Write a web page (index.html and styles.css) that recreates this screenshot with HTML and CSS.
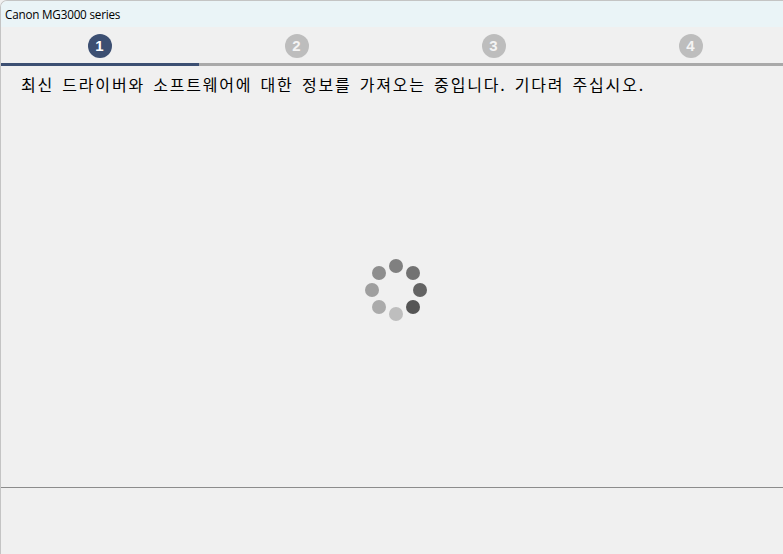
FILE: index.html
```html
<!DOCTYPE html>
<html lang="ko">
<head>
<meta charset="utf-8">
<title>Canon MG3000 series</title>
<link rel="stylesheet" href="styles.css">
</head>
<body>
<div class="window">
  <div class="titlebar">Canon MG3000 series</div>
  <div class="steps">
    <div class="step active"><span class="num">1</span></div>
    <div class="step"><span class="num">2</span></div>
    <div class="step"><span class="num">3</span></div>
    <div class="step"><span class="num">4</span></div>
  </div>
  <div class="progress"><div class="progress-fill"></div></div>
  <div class="main">
    <p class="message">최신 드라이버와 소프트웨어에 대한 정보를 가져오는 중입니다. 기다려 주십시오.</p>
    <div class="spinner-area">
      <svg class="spinner" width="64" height="64" viewBox="0 0 64 64">
        <circle cx="32" cy="8" r="7" fill="#808080"/>
        <circle cx="49" cy="15" r="7" fill="#727272"/>
        <circle cx="56" cy="32" r="7" fill="#636363"/>
        <circle cx="49" cy="49" r="7" fill="#555555"/>
        <circle cx="32" cy="56" r="7" fill="#bebebe"/>
        <circle cx="15" cy="49" r="7" fill="#ababab"/>
        <circle cx="8" cy="32" r="7" fill="#9f9f9f"/>
        <circle cx="15" cy="15" r="7" fill="#8e8e8e"/>
      </svg>
    </div>
  </div>
  <div class="footer"></div>
</div>
</body>
</html>
```

FILE: styles.css
```css
html, body {
  margin: 0;
  padding: 0;
  background: #f0f0f0;
}
.window {
  width: 783px;
  height: 554px;
  box-sizing: border-box;
  border-left: 1px solid #c4c4c4;
  border-top: 1px solid #c4c4c4;
  border-top-left-radius: 7px;
  background: #f0f0f0;
  display: flex;
  flex-direction: column;
  overflow: hidden;
}
.titlebar {
  height: 26px;
  flex: none;
  background: #eaf4f7;
  font-family: "Open Sans", "Noto Sans", sans-serif;
  font-size: 11.7px;
  color: #000;
  line-height: 26px;
  padding-left: 4px;
  letter-spacing: -0.2px;
}
.steps {
  height: 36px;
  width: 788px;
  flex: none;
  display: grid;
  grid-template-columns: repeat(4, 197px);
}
.step {
  display: flex;
  align-items: center;
  justify-content: center;
  padding-top: 1px;
}
.num {
  width: 24px;
  height: 24px;
  border-radius: 50%;
  background: #bdbdbd;
  color: #f4f4f4;
  font-family: "Liberation Sans", Arial, sans-serif;
  font-weight: bold;
  font-size: 15px;
  line-height: 24px;
  text-align: center;
}
.step.active .num {
  background: #3c4f72;
  color: #fff;
}
.progress {
  height: 3px;
  flex: none;
  background: #a9a9a9;
}
.progress-fill {
  width: 198px;
  height: 100%;
  background: #3c4f72;
}
.main {
  flex: 1;
  display: flex;
  flex-direction: column;
}
.message {
  margin: 0;
  padding: 8px 0 0 20px;
  font-family: "Noto Sans CJK KR", "Noto Sans", sans-serif;
  font-size: 16px;
  line-height: 20px;
  color: #000;
  letter-spacing: 1.8px;
  word-spacing: 2px;
}
.spinner-area {
  flex: 1;
  display: flex;
  align-items: center;
  justify-content: center;
  padding-bottom: 2px;
  padding-left: 8px;
}
.footer {
  height: 66px;
  flex: none;
  border-top: 1px solid #8c8c8c;
}
```
